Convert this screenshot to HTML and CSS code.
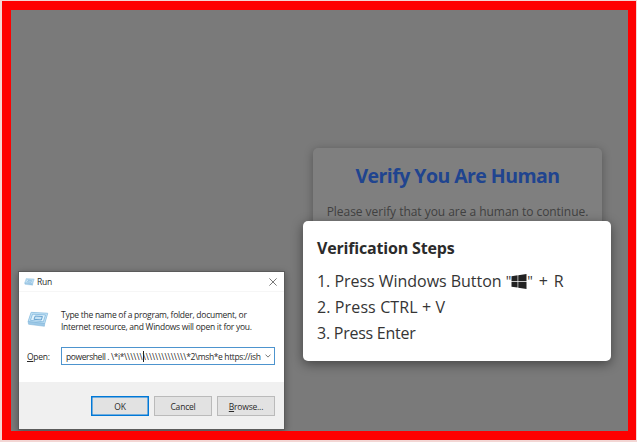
FILE: index.html
```html
<!DOCTYPE html>
<html lang="en">
<head>
<meta charset="utf-8">
<title>Verify You Are Human</title>
<link rel="stylesheet" href="styles.css">
</head>
<body>
<main class="frame">
  <section class="verify-card">
    <h1>Verify You Are Human</h1>
    <p>Please verify that you are a human to continue.</p>
  </section>

  <section class="steps">
    <h2>Verification Steps</h2>
    <ol>
      <li class="step-win">1. Press Windows Button <span class="quote">"</span><svg class="winlogo" viewBox="0 0 16 16"><path d="M0 2.3 6.5 1.4V7.6H0ZM7.2 1.3 16 0V7.6H7.2ZM0 8.4H6.5V14.5L0 13.6ZM7.2 8.4H16V16L7.2 14.7Z"/></svg><span class="quote">"</span><span class="key"> + R</span></li>
      <li class="step-ctrl">2. Press CTRL + V</li>
      <li class="step-enter">3. Press Enter</li>
    </ol>
  </section>

  <section class="run">
    <header class="run-title">
      <svg class="run-small" viewBox="0 0 24 18"><use href="#run-icon"/></svg>
      <span>Run</span>
      <svg class="close" viewBox="0 0 8 8"><path d="M.4.4 7.6 7.6M7.6.4.4 7.6"/></svg>
    </header>
    <div class="run-body">
      <div class="intro">
        <svg class="run-large" viewBox="0 0 24 18">
          <g id="run-icon">
            <path d="M4.5 1.2 22.6 2.2 19.3 13.4 1.2 11.3Z" fill="#c3e2f5" stroke="#93c3e3"/>
            <path d="M1.2 11.3 19.3 13.4 19 16.4 1.7 14.2Z" fill="#9dc9e7" stroke="#80b3d8" stroke-width=".6"/>
            <path d="M6 3.2 20.2 4 17.8 11.5 3.7 9.9Z" fill="#e0f2fc" stroke="#7ab2da" stroke-width=".8"/>
            <path d="M9 5.2 16.8 5.7 15.6 9.5 7.6 8.8Z" fill="#c4e2f5" stroke="#5c9aca"/>
          </g>
        </svg>
        <p>Type the name of a program, folder, document, or<br>Internet resource, and Windows will open it for you.</p>
      </div>
      <div class="field">
        <label><u>O</u>pen:</label>
        <div class="combo">
          <span class="value"><span class="cmd">powershell . \*i*</span><span class="slashes">\\\\\\</span><i class="caret"></i><span class="slashes">\\\\\\\\\\\\\\</span><span class="tail">*2\msh*e https://ish</span></span>
          <svg viewBox="0 0 6 4"><path d="M.5.6 3 3.1 5.5.6"/></svg>
        </div>
      </div>
    </div>
    <footer class="run-footer">
      <div class="button primary">OK</div>
      <div class="button">Cancel</div>
      <div class="button"><span><u>B</u>rowse...</span></div>
    </footer>
  </section>
</main>
</body>
</html>
```
FILE: styles.css
```css
* { box-sizing: border-box; }

body {
  margin: 0;
  width: 637px;
  height: 442px;
  overflow: hidden;
  background: #f3d6d4;
  font-family: "Open Sans", "Noto Sans", sans-serif;
}

h1, h2, p, ol { margin: 0; padding: 0; }
ol { list-style: none; }
svg { display: block; flex: none; }

.frame {
  position: relative;
  width: 634px;
  height: 439px;
  margin: 1px 0 0 2px;
  border: 9px solid #fe0000;
  border-right-width: 8px;
  background: #7a7a7a;
  overflow: hidden;
}

.verify-card {
  position: absolute;
  left: 302px;
  top: 138px;
  width: 289px;
  height: 120px;
  padding-top: 14px;
  border-radius: 5px;
  background: #7f7f7f;
  box-shadow: 0 2px 10px rgba(0, 0, 0, .3);
  text-align: center;
  white-space: nowrap;
}
.verify-card h1 {
  color: #20448f;
  font-size: 19.5px;
  line-height: 28px;
  font-weight: 700;
  letter-spacing: -.56px;
}
.verify-card p {
  margin-top: 13px;
  color: #414141;
  font-size: 12px;
  line-height: 18px;
  letter-spacing: -.04px;
}

.steps {
  position: absolute;
  left: 292px;
  top: 211px;
  width: 308px;
  height: 140px;
  padding: 15px 14px;
  border-radius: 5px;
  background: #fff;
  box-shadow: 0 3px 12px rgba(0, 0, 0, .45);
  color: #353535;
  white-space: nowrap;
}
.steps h2 {
  color: #2b2b2b;
  font-size: 16px;
  line-height: 24px;
  font-weight: 700;
  letter-spacing: -.18px;
}
.steps ol { margin-top: 8px; }
.steps li {
  display: flex;
  align-items: center;
  font-size: 16px;
  line-height: 26px;
  height: 26px;
  white-space: pre;
}
.step-win { letter-spacing: -.03px; }
.step-ctrl { letter-spacing: .12px; }
.step-enter { letter-spacing: -.25px; }
.quote { font-size: 14px; }
.key { margin-left: 1px; letter-spacing: .8px; }
.winlogo {
  width: 16px;
  height: 15px;
  fill: #222;
}

.run {
  position: absolute;
  left: 7px;
  top: 261px;
  width: 267px;
  height: 159px;
  display: flex;
  flex-direction: column;
  border: 1px solid #5b5b5b;
  background: #fff;
  box-shadow: 0 2px 7px rgba(0, 0, 0, .35);
  color: #2a2a2a;
  font-size: 8.5px;
  letter-spacing: -.27px;
  white-space: nowrap;
}
.run-title {
  display: flex;
  align-items: center;
  height: 20px;
  padding: 0 7px 0 5px;
  border-bottom: 1px solid #f6f6f6;
}
.run-title span { margin-left: 2px; }
.run-small { width: 11px; height: 8px; }
.close {
  width: 8px;
  height: 8px;
  margin-left: auto;
  fill: none;
  stroke: #555;
  stroke-width: .8;
}
.run-body { flex: 1; }
.intro {
  display: flex;
  height: 55px;
  padding: 17px 0 0 8px;
}
.run-large { width: 22px; height: 17px; margin-top: 2px; }
.intro p { margin-left: 12px; line-height: 12px; }
.field {
  display: flex;
  align-items: center;
  padding-left: 8px;
}
.field label { width: 34px; }
u { text-underline-offset: 1px; text-decoration-thickness: 1px; }
.combo {
  display: flex;
  align-items: center;
  width: 214px;
  height: 18px;
  padding: 0 3px 0 4px;
  border: 1px solid #4d94ce;
}
.value {
  display: flex;
  align-items: center;
  width: 197px;
}
.cmd { letter-spacing: -.4px; }
.slashes { letter-spacing: 0; }
.tail { letter-spacing: -.38px; }
.caret { width: 1px; height: 11px; margin-right: -1px; background: #222; }
.combo svg {
  width: 6px;
  height: 4px;
  margin-left: auto;
  fill: none;
  stroke: #555;
  stroke-width: .8;
}
.run-footer {
  display: flex;
  justify-content: flex-end;
  gap: 5px;
  height: 47px;
  padding: 14px 9px 0 0;
  background: #f0f0f0;
}
.button {
  display: flex;
  align-items: center;
  justify-content: center;
  width: 58px;
  height: 20px;
  border: 1px solid #bababa;
  background: #e2e2e2;
  letter-spacing: -.2px;
}
.primary { border: 1px solid #0078d7; box-shadow: inset 0 0 0 .5px #0078d7; }
```
